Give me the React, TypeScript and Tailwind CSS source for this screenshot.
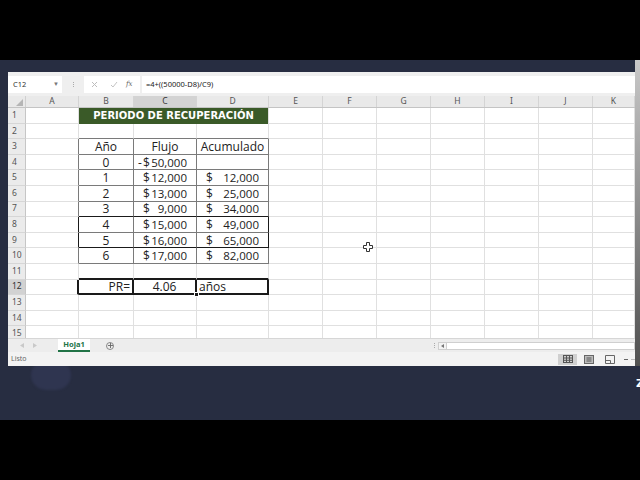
import React from 'react';

const COLW = ['w-[53px]', 'w-[55px]', 'w-[63px]', 'w-[72px]', 'w-[54px]', 'w-[54px]', 'w-[54px]', 'w-[54px]', 'w-[54px]', 'w-[54px]', 'w-[42px]'];
const LETTERS = ['A', 'B', 'C', 'D', 'E', 'F', 'G', 'H', 'I', 'J', 'K'];
const FLUJO = ['50,000', '12,000', '13,000', '9,000', '15,000', '16,000', '17,000'];
const ACUM = ['', '12,000', '25,000', '34,000', '49,000', '65,000', '82,000'];

type BT = 'g' | 't' | 'k' | 'k2';
const RB: Record<BT, string> = {
  g: 'border-r border-r-[#e0e0e0]',
  t: 'border-r border-r-[#7a7a7a]',
  k: 'border-r border-r-[#1a1a1a]',
  k2: 'border-r-2 border-r-[#1a1a1a]',
};
const BB: Record<BT, string> = {
  g: 'border-b border-b-[#e0e0e0]',
  t: 'border-b border-b-[#7a7a7a]',
  k: 'border-b border-b-[#1a1a1a]',
  k2: 'border-b-2 border-b-[#1a1a1a]',
};

function rightType(r: number, c: number): BT {
  if (r >= 3 && r <= 10 && c <= 3) {
    if ((r === 8 || r === 9) && (c === 0 || c === 3)) return 'k';
    return 't';
  }
  if (r === 12 && c <= 3) return 'k2';
  return 'g';
}

function bottomType(r: number, c: number): BT {
  if (c >= 1 && c <= 3) {
    if (r === 7 || r === 9) return 'k';
    if (r >= 2 && r <= 10) return 't';
    if (r === 11 || r === 12) return 'k2';
  }
  return 'g';
}

function cellBody(r: number, c: number): React.ReactNode {
  if (r === 3) {
    if (c === 1) return <span className="w-full text-center">Año</span>;
    if (c === 2) return <span className="w-full text-center">Flujo</span>;
    if (c === 3) return <span className="w-full text-center">Acumulado</span>;
  }
  if (r >= 4 && r <= 10) {
    const i = r - 4;
    if (c === 1) return <span className="w-full text-center">{i}</span>;
    if (c === 2)
      return (
        <div className="flex w-full pl-[4px] pr-[9px]">
          <span className="w-[5px]">{i === 0 ? '-' : ''}</span>
          <span>$</span>
          <span className="ml-auto text-[11.5px]">{FLUJO[i]}</span>
        </div>
      );
    if (c === 3 && ACUM[i])
      return (
        <div className="flex w-full pl-[9px] pr-[9px]">
          <span>$</span>
          <span className="ml-auto text-[11.5px]">{ACUM[i]}</span>
        </div>
      );
  }
  if (r === 12) {
    if (c === 1) return <span className="w-full pr-[2px] text-right">PR=</span>;
    if (c === 2) return <span className="w-full text-center">4.06</span>;
    if (c === 3) return <span className="pl-[2px]">años</span>;
  }
  return null;
}

function Row({ r }: { r: number }) {
  const sel = r === 12;
  return (
    <div className="flex h-[15.6px] shrink-0">
      <div
        className={`flex w-[18px] shrink-0 items-center border-r border-b border-r-[#c6c6c6] border-b-[#d6d6d6] pl-[4px] font-['Noto_Sans',sans-serif] text-[8.5px] ${
          sel ? 'bg-[#d2d2d2] text-[#333]' : 'bg-[#ebebeb] text-[#555]'
        }`}
      >
        {r}
      </div>
      {LETTERS.map((_, c) => {
        if (r === 1 && (c === 2 || c === 3)) return null;
        if (r === 1 && c === 1) {
          return (
            <div
              key={c}
              className="flex w-[190px] shrink-0 items-center justify-center border-r border-r-[#e0e0e0] bg-[#3a5a28] font-['DejaVu_Sans',sans-serif] text-[10px] font-bold text-white"
            >
              PERIODO DE RECUPERACIÓN
            </div>
          );
        }
        return (
          <div
            key={c}
            className={`relative flex shrink-0 items-center pt-[1px] font-['Open_Sans',sans-serif] text-[12px] text-[#222] ${COLW[c]} ${RB[rightType(r, c)]} ${BB[bottomType(r, c)]}`}
          >
            {cellBody(r, c)}
            {r === 12 && c === 2 && (
              <div className="absolute -right-[4px] -bottom-[4px] z-10 h-[5px] w-[5px] border border-white bg-[#1a1a1a]" />
            )}
          </div>
        );
      })}
    </div>
  );
}

function NormalIcon() {
  return (
    <svg width="10" height="8" viewBox="0 0 10 8">
      <rect x="0.5" y="0.5" width="9" height="7" fill="none" stroke="#555" />
      <line x1="3.5" y1="0.5" x2="3.5" y2="7.5" stroke="#555" />
      <line x1="6.5" y1="0.5" x2="6.5" y2="7.5" stroke="#555" />
      <line x1="0.5" y1="3" x2="9.5" y2="3" stroke="#555" />
      <line x1="0.5" y1="5.3" x2="9.5" y2="5.3" stroke="#555" />
    </svg>
  );
}

function LayoutIcon() {
  return (
    <svg width="10" height="9" viewBox="0 0 10 9">
      <rect x="0.5" y="0.5" width="9" height="8" fill="#bbb" stroke="#666" />
      <rect x="2.5" y="2" width="5" height="5" fill="#888" stroke="none" />
    </svg>
  );
}

function BreakIcon() {
  return (
    <svg width="10" height="9" viewBox="0 0 10 9">
      <path d="M0.5 0.5 H9.5 V8.5 H0.5 Z" fill="none" stroke="#666" />
      <path d="M0.5 5.5 H5.5 V8.5" fill="none" stroke="#666" />
    </svg>
  );
}

export default function App() {
  const rows = Array.from({ length: 15 }, (_, i) => i + 1);
  return (
    <div className="h-[480px] w-[640px] overflow-hidden bg-black">
      <div className="h-[60px]" />
      <div className="relative flex h-[360px] bg-[#272d41]">
        <div className="absolute top-[300px] left-[31px] h-[30px] w-[40px] rounded-full bg-[#2f3550] blur-[1px]" />
        <div className="relative z-10 mt-[12px] ml-[8px] flex h-[294px] w-[627px] shrink-0 flex-col overflow-hidden bg-white">
          {/* formula bar */}
          <div className="flex h-[24px] shrink-0 items-center bg-[#efefef] pt-[1px] font-['Noto_Sans',sans-serif] text-[7.5px] text-[#333]">
            <div className="flex h-[17px] w-[54px] items-center justify-between bg-white pr-[3px] pl-[5px]">
              <span>C12</span>
              <span className="text-[6px] text-[#777]">▼</span>
            </div>
            <div className="flex w-[22px] flex-col items-center justify-center gap-[1px]">
              <span className="h-[1px] w-[1px] bg-[#aaa]" />
              <span className="h-[1px] w-[1px] bg-[#aaa]" />
              <span className="h-[1px] w-[1px] bg-[#aaa]" />
            </div>
            <div className="flex h-[17px] w-[56px] items-center bg-white">
              <svg width="7" height="7" viewBox="0 0 7 7" className="ml-[7px]">
                <path d="M1 1 L6 6 M6 1 L1 6" stroke="#bdbdbd" strokeWidth="1" />
              </svg>
              <svg width="8" height="7" viewBox="0 0 8 7" className="ml-[12px]">
                <path d="M1 4 L3 6 L7 1" stroke="#c4c4c4" strokeWidth="1" fill="none" />
              </svg>
              <span className="ml-[8px] font-['DejaVu_Serif',serif] text-[7px] text-[#666] italic">fx</span>
            </div>
            <div className="ml-[2px] flex h-[17px] flex-1 items-center bg-white pl-[4px] text-[7.5px] text-[#222]">
              =4+((50000-D8)/C9)
            </div>
          </div>
          {/* column headers */}
          <div className="flex h-[12px] shrink-0 border-b border-b-[#c4c4c4] bg-[#e9e9e9] font-['Noto_Sans',sans-serif] text-[8.5px] text-[#555]">
            <div className="relative w-[18px] shrink-0 border-r border-r-[#d0d0d0]">
              <svg width="7" height="7" viewBox="0 0 7 7" className="absolute right-[2px] bottom-[1px]">
                <path d="M7 0 L7 7 L0 7 Z" fill="#b5b5b5" />
              </svg>
            </div>
            {LETTERS.map((l, c) => (
              <div
                key={l}
                className={`flex shrink-0 items-center justify-center border-r border-r-[#d4d4d4] ${COLW[c]} ${
                  c === 2 ? 'bg-[#d3d3d3] text-[#333]' : ''
                }`}
              >
                {l}
              </div>
            ))}
          </div>
          {/* grid */}
          <div className="flex h-[230px] shrink-0 flex-col overflow-hidden">
            {rows.map((r) => (
              <Row key={r} r={r} />
            ))}
          </div>
          {/* tab bar */}
          <div className="flex h-[14px] shrink-0 items-stretch border-t border-t-[#d6d6d6] bg-[#ededed] font-['Noto_Sans',sans-serif]">
            <div className="flex w-[50px] items-center gap-[9px] pl-[12px]">
              <svg width="4" height="5" viewBox="0 0 4 5">
                <path d="M4 0 L0 2.5 L4 5 Z" fill="#c9c9c9" />
              </svg>
              <svg width="4" height="5" viewBox="0 0 4 5">
                <path d="M0 0 L4 2.5 L0 5 Z" fill="#c9c9c9" />
              </svg>
            </div>
            <div className="flex w-[32px] items-center justify-center border-b-2 border-b-[#217346] bg-white text-[7.5px] font-bold text-[#217346]">
              Hoja1
            </div>
            <div className="ml-[16px] flex items-center">
              <div className="flex h-[8px] w-[8px] items-center justify-center rounded-full border border-[#888]">
                <svg width="5" height="5" viewBox="0 0 5 5">
                  <path d="M2.5 0 V5 M0 2.5 H5" stroke="#666" strokeWidth="0.9" />
                </svg>
              </div>
            </div>
            <div className="flex-1" />
            <div className="flex w-[8px] flex-col items-center justify-center gap-[1px]">
              <span className="h-[1px] w-[1px] bg-[#aaa]" />
              <span className="h-[1px] w-[1px] bg-[#aaa]" />
              <span className="h-[1px] w-[1px] bg-[#aaa]" />
            </div>
            <div className="flex w-[197px] items-center">
              <div className="flex h-[8px] w-full items-center border border-[#cfcfcf] bg-white">
                <div className="flex h-full w-[8px] items-center justify-center border-r border-r-[#cfcfcf] bg-[#f3f3f3]">
                  <svg width="3" height="4" viewBox="0 0 3 4">
                    <path d="M3 0 L0 2 L3 4 Z" fill="#777" />
                  </svg>
                </div>
              </div>
            </div>
          </div>
          {/* status bar */}
          <div className="flex h-[14px] shrink-0 items-center bg-[#f3f3f3] font-['Noto_Sans',sans-serif] text-[7px] text-[#666]">
            <span className="pl-[3px]">Listo</span>
            <div className="flex-1" />
            <div className="flex h-[11px] w-[19px] items-center justify-center bg-[#d0d0d0]">
              <NormalIcon />
            </div>
            <div className="ml-[2px] flex h-[11px] w-[19px] items-center justify-center">
              <LayoutIcon />
            </div>
            <div className="ml-[2px] flex h-[11px] w-[19px] items-center justify-center">
              <BreakIcon />
            </div>
            <div className="flex w-[16px] items-center pl-[5px]">
              <span className="h-[1px] w-[5px] bg-[#666]" />
              <span className="ml-[3px] h-[1px] w-[4px] bg-[#bbb]" />
            </div>
          </div>
        </div>
        <div className="flex w-[5px] shrink-0 flex-col">
          <div className="h-[306px] w-[5px] bg-gradient-to-b from-[#c9c9c9] via-[#8c8c8c] to-[#505050]" />
          <div className="mt-[12px] h-[12px] overflow-hidden pl-[1px] font-['DejaVu_Sans',sans-serif] text-[11px] leading-[12px] font-bold text-white">
            Z
          </div>
        </div>
        <svg width="10" height="10" viewBox="0 0 10 10" className="absolute top-[182px] left-[363px] z-20">
          <path d="M3.5 0.5 H6.5 V3.5 H9.5 V6.5 H6.5 V9.5 H3.5 V6.5 H0.5 V3.5 H3.5 Z" fill="white" stroke="#333" strokeWidth="1" />
        </svg>
      </div>
      <div className="h-[60px]" />
    </div>
  );
}
